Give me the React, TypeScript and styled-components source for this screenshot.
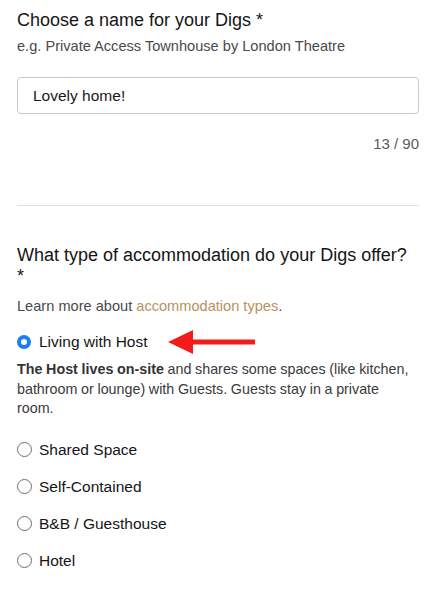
import React from "react";
import styled, { createGlobalStyle } from "styled-components";

const GlobalStyle = createGlobalStyle`
  html, body {
    margin: 0;
    padding: 0;
    background: #fff;
  }
  body {
    font-family: "Liberation Sans", Arial, Helvetica, sans-serif;
    color: #222;
  }
`;

const Page = styled.div`
  width: 402px;
  padding: 0 17px 30px;
`;

const Title = styled.h2<{ $top?: number }>`
  margin: ${(p) => p.$top ?? 0}px 0 0;
  max-width: 398px;
  font-size: 18px;
  font-weight: normal;
  line-height: 21px;
  color: #151515;
`;

const Hint = styled.p<{ $top?: number }>`
  margin: ${(p) => p.$top ?? 0}px 0 0;
  font-size: 14.6px;
  line-height: 20px;
  color: #4a4a4a;
`;

const TextInput = styled.input`
  display: block;
  box-sizing: border-box;
  width: 100%;
  height: 37px;
  margin-top: 21px;
  padding: 0 15px;
  border: 1px solid #c8c8c8;
  border-radius: 4px;
  font-family: inherit;
  font-size: 15.5px;
  color: #1a1a1a;
  outline: none;
`;

const Counter = styled.div`
  margin-top: 20px;
  text-align: right;
  font-size: 15px;
  line-height: 20px;
  color: #5a5a5a;
`;

const Divider = styled.hr`
  margin: 51px 0 0;
  border: 0;
  border-top: 1px solid #e2e2e2;
`;

const Link = styled.a`
  color: #b8925c;
  text-decoration: none;
`;

const Options = styled.div`
  display: flex;
  flex-direction: column;
`;

const Option = styled.label<{ $top: number }>`
  position: relative;
  display: flex;
  align-items: center;
  height: 20px;
  margin-top: ${(p) => p.$top}px;
  font-size: 15.5px;
  color: #151515;
`;

const Radio = styled.input.attrs({ type: "radio" })`
  appearance: none;
  box-sizing: border-box;
  flex: none;
  width: 15px;
  height: 15px;
  margin: 0 7px 0 0;
  border-radius: 50%;
  border: 1.3px solid #6e6e6e;
  background: #fff;

  &:checked {
    width: 14px;
    height: 14px;
    margin: 0 8px 0 0;
    border: 4.5px solid #1a7ef4;
    background: #fff;
  }
`;

const Description = styled.p`
  margin: 8px 0 0;
  font-size: 14.3px;
  line-height: 19.5px;
  word-spacing: -0.3px;
  color: #3a3a3a;

  strong {
    color: #333;
  }
`;

const Arrow = styled.svg`
  position: absolute;
  left: 151px;
  top: -2px;
`;

const types = ["Shared Space", "Self-Contained", "B&B / Guesthouse", "Hotel"];

export default function App() {
  return (
    <>
      <GlobalStyle />
      <Page>
        <Title $top={10}>Choose a name for your Digs *</Title>
        <Hint $top={5}>e.g. Private Access Townhouse by London Theatre</Hint>
        <TextInput defaultValue="Lovely home!" />
        <Counter>13 / 90</Counter>
        <Divider />
        <Title $top={39}>What type of accommodation do your Digs offer? *</Title>
        <Hint $top={9}>
          Learn more about <Link href="#">accommodation types</Link>.
        </Hint>
        <Options>
          <Option $top={16}>
            <Radio name="type" defaultChecked />
            Living with Host
            <Arrow width="90" height="24" viewBox="0 0 90 24">
              <path d="M22 9.5 H87 V14.5 H22 Z" fill="#f21c1c" />
              <path d="M0 12 L25 0 L25 24 Z" fill="#f21c1c" />
            </Arrow>
          </Option>
          <Description>
            <strong>The Host lives on-site</strong> and shares some spaces (like
            kitchen, bathroom or lounge) with Guests. Guests stay in a private
            room.
          </Description>
          {types.map((t, i) => (
            <Option key={t} $top={i === 0 ? 21 : 17}>
              <Radio name="type" />
              {t}
            </Option>
          ))}
        </Options>
      </Page>
    </>
  );
}
